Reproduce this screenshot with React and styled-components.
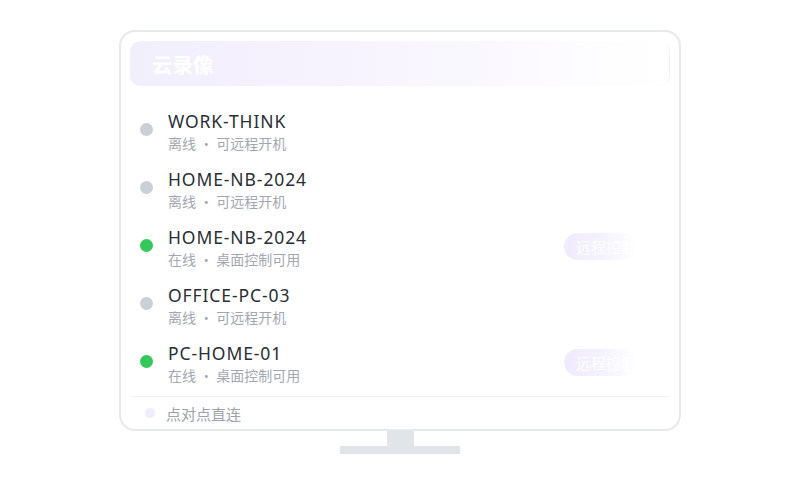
import React from "react";
import styled, { createGlobalStyle } from "styled-components";

const Global = createGlobalStyle`
  html, body { margin: 0; padding: 0; }
  body {
    width: 800px;
    height: 500px;
    background: #ffffff;
    font-family: "Noto Sans", "Noto Sans CJK SC", sans-serif;
    overflow: hidden;
  }
`;

const Stage = styled.div`
  display: flex;
  flex-direction: column;
  align-items: center;
  padding-top: 30px;
`;

const Frame = styled.div`
  width: 540px;
  height: 388px;
  border: 2px solid #e6e8eb;
  border-radius: 16px;
  padding: 9px 9px 0;
  background: #fff;
  display: flex;
  flex-direction: column;
`;

const Header = styled.div`
  height: 45px;
  border-radius: 10px;
  background: linear-gradient(90deg, #f2effd 0%, #f6f3fe 40%, #fdfcff 85%, #ffffff 100%);
  border-right: 1px solid #f1f2f4;
  display: flex;
  align-items: center;
  padding-left: 22px;
  color: #fff;
  font-size: 20.5px;
  font-weight: 700;
  font-family: "Noto Sans CJK SC", sans-serif;
`;

const List = styled.div`
  margin-top: 16px;
  display: flex;
  flex-direction: column;
`;

const Row = styled.div`
  height: 58px;
  display: flex;
  align-items: center;
  padding-left: 10px;
  padding-right: 33px;
  box-sizing: border-box;
`;

const Dot = styled.div`
  width: 13px;
  height: 13px;
  border-radius: 50%;
  background: ${(p) => (p.$online ? "#34c759" : "#cbcfd6")};
  flex: none;
  margin-top: -3px;
`;

const Texts = styled.div`
  margin-left: 15px;
  display: flex;
  flex-direction: column;
  flex: 1;
`;

const Name = styled.div`
  font-size: 17.5px;
  line-height: 22px;
  color: #2a2e35;
  letter-spacing: 0.9px;
`;

const Sub = styled.div`
  font-size: 14px;
  line-height: 20px;
  color: #a3a8b0;
  font-family: "Noto Sans CJK SC", sans-serif;
  margin-top: 1px;
`;

const Action = styled.div`
  width: 73px;
  height: 27px;
  border-radius: 14px;
  box-sizing: border-box;
  padding-left: 12px;
  overflow: hidden;
  white-space: nowrap;
  background: linear-gradient(90deg, #efebfd 0%, #f4f1fe 50%, #ffffff 100%);
  color: #fff;
  font-size: 15px;
  line-height: 27px;
  font-family: "Noto Sans CJK SC", serif;
  margin-top: -2px;
`;

const Divider = styled.div`
  height: 1px;
  background: #eef0f3;
  margin: 4px 2px 0;
`;

const Footer = styled.div`
  flex: 1;
  display: flex;
  align-items: center;
  padding-left: 15px;
  gap: 11px;
`;

const FootDot = styled.div`
  width: 10px;
  height: 10px;
  border-radius: 50%;
  background: #f0ecfd;
`;

const FootText = styled.div`
  font-size: 15px;
  color: #9ca2aa;
  font-family: "Noto Sans CJK SC", sans-serif;
`;

const Neck = styled.div`
  width: 27px;
  height: 15px;
  background: #e1e4e8;
`;

const Base = styled.div`
  width: 120px;
  height: 8px;
  background: #e1e4e8;
`;

const devices = [
  { name: "WORK-THINK", online: false },
  { name: "HOME-NB-2024", online: false },
  { name: "HOME-NB-2024", online: true },
  { name: "OFFICE-PC-03", online: false },
  { name: "PC-HOME-01", online: true },
];

export default function App() {
  return (
    <>
      <Global />
      <Stage>
        <Frame>
          <Header>云录像</Header>
          <List>
            {devices.map((d, i) => (
              <Row key={i}>
                <Dot $online={d.online} />
                <Texts>
                  <Name>{d.name}</Name>
                  <Sub>{d.online ? "在线 · 桌面控制可用" : "离线 · 可远程开机"}</Sub>
                </Texts>
                {d.online && <Action>远程控制</Action>}
              </Row>
            ))}
          </List>
          <Divider />
          <Footer>
            <FootDot />
            <FootText>点对点直连</FootText>
          </Footer>
        </Frame>
        <Neck />
        <Base />
      </Stage>
    </>
  );
}
